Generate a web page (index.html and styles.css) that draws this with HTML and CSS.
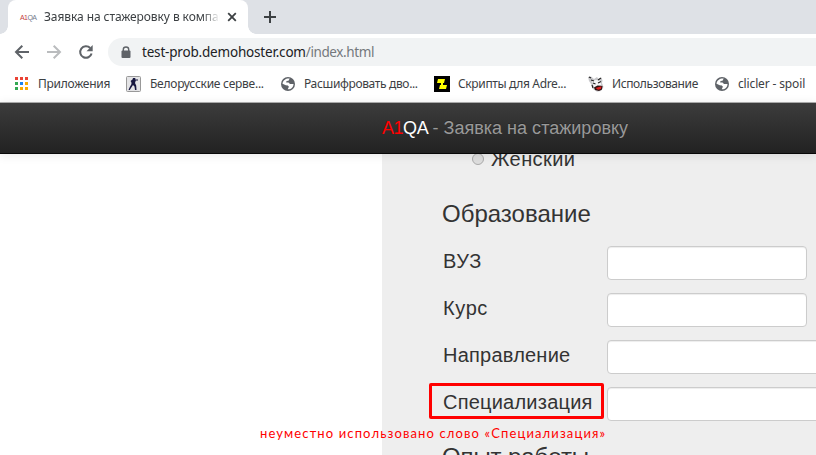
FILE: index.html
```html
<!DOCTYPE html>
<html lang="ru">
<head>
<meta charset="utf-8">
<title>Заявка на стажировку</title>
<link rel="stylesheet" href="styles.css">
</head>
<body>
<div class="window">
  <div class="tabstrip">
    <div class="tab">
      <span class="favicon"><span class="fav-red">A1</span>QA</span>
      <span class="tab-title">Заявка на стажеровку в компании</span>
      <svg class="tab-close" width="10" height="10" viewBox="0 0 10 10"><path d="M1.2 1.2l7.6 7.6M8.8 1.2L1.2 8.8" stroke="#3c4043" stroke-width="1.8"/></svg>
    </div>
    <svg class="new-tab" width="14" height="14" viewBox="0 0 14 14"><path d="M7 1v12M1 7h12" stroke="#3c4043" stroke-width="2"/></svg>
  </div>
  <div class="toolbar">
    <svg class="nav-icon" width="16" height="16" viewBox="0 0 16 16"><path d="M15 8H2.5M8.3 1.7L2 8l6.3 6.3" fill="none" stroke="#5f6368" stroke-width="2"/></svg>
    <svg class="nav-icon" width="16" height="16" viewBox="0 0 16 16"><path d="M1 8h12.5M7.7 1.7L14 8l-6.3 6.3" fill="none" stroke="#babcbe" stroke-width="2"/></svg>
    <svg class="nav-icon" width="16" height="16" viewBox="0 0 16 16"><path d="M13.6 9.5A5.8 5.8 0 1 1 12.2 4" fill="none" stroke="#5f6368" stroke-width="2"/><path d="M14.7 1v6.2H8.5z" fill="#5f6368"/></svg>
    <div class="omnibox">
      <svg class="lock" width="10" height="13" viewBox="0 0 10 13"><path d="M2.3 6V3.4a2.7 2.4 0 0 1 5.4 0V6" fill="none" stroke="#5f6368" stroke-width="1.4"/><rect x="0.5" y="4.5" width="9" height="7.5" rx="1" fill="#5f6368"/></svg>
      <span class="url-host">test-prob.demohoster.com</span><span class="url-path">/index.html</span>
    </div>
  </div>
  <div class="bookmarks">
    <div class="bookmark bm-apps">
      <svg width="16" height="16" viewBox="0 0 16 16"><path d="M1 1h3v3H1zM6 1h3v3H6zM11 1h3v3h-3z" fill="#ea4335"/><path d="M1 6h3v3H1zM1 11h3v3H1z" fill="#34a853"/><path d="M6 6h3v3H6z" fill="#1a84f0"/><path d="M11 6h3v3h-3zM6 11h3v3H6zM11 11h3v3h-3z" fill="#f9ab00"/></svg>
      <span class="bm-text">Приложения</span>
    </div>
    <div class="bookmark bm-games">
      <svg width="16" height="16" viewBox="0 0 16 16"><rect x=".5" y=".5" width="14" height="15" rx="1" fill="#e4e4e6" stroke="#999"/><path d="M7 2h2.300v1.500H12v1H9.800L9 7l1.200 2.500.3 4.500H9l-.5-3.500L7 9l-2 3-1.200 2H2.500l1.300-3L5.500 8 5.300 6 4.500 5l2-1.500z" fill="#171740"/></svg>
      <span class="bm-text">Белорусские серве...</span>
    </div>
    <div class="bookmark bm-decode">
      <svg width="16" height="16" viewBox="0 0 16 16"><circle cx="8" cy="8" r="7" fill="#5f6368"/><path d="M9.7 2.6C6.5 2 3 4 2.5 7.7l3.3 1.6 2.1.2 1 1.3-1.2 2.5C11 13.600 13.600 11 13.500 8H10L8.500 6.500H6.200L6.500 5l2-.3z" fill="#fff"/></svg>
      <span class="bm-text">Расшифровать дво...</span>
    </div>
    <div class="bookmark bm-scripts">
      <svg width="16" height="16" viewBox="0 0 16 16"><path d="M0 0h16v16H0z"/><path d="M4 3h7l-1 4H3zM6 9h7l-1 4H5z" fill="#ff0"/><path d="M7 6.500h2v3H7z" fill="#ff0"/></svg>
      <span class="bm-text">Скрипты для Adre...</span>
    </div>
    <div class="bookmark bm-usage">
      <svg width="16" height="16" viewBox="0 0 16 16"><path d="M0 1l3-.5L6 3l3-2 1.500 2 3-1.500 1 3L14 7l1.500 4-2.500 4-4 .8L5 13 3 8 1 5z" fill="#c9c9cc"/><path d="M4 5l4-1 5 1v4l-7 2z" fill="#f4f4f6"/><path d="M1 1l2 1M3 4l3 1M10 4l3-2M5 7l2.500 1M10 7l3-1.500M4 9l1 3" stroke="#222" stroke-width="1.200"/><path d="M6 11.500l3.500-2 5 .5-.5 3.500-3 1.500-4-1z" fill="#2a1010"/><path d="M7.500 12l6-1.700-.5 2.700-3 .8z" fill="#e02020"/></svg>
      <span class="bm-text">Использование</span>
    </div>
    <div class="bookmark bm-spoil">
      <svg width="16" height="16" viewBox="0 0 16 16"><circle cx="8" cy="8" r="7" fill="#5f6368"/><path d="M9.7 2.6C6.5 2 3 4 2.5 7.7l3.3 1.6 2.1.2 1 1.3-1.2 2.5C11 13.600 13.600 11 13.500 8H10L8.500 6.500H6.200L6.500 5l2-.3z" fill="#fff"/></svg>
      <span class="bm-text">clicler - spoil</span>
    </div>
  </div>
  <header class="navbar"><span class="brand-red">A1</span><span class="brand-white">QA</span><span class="brand-title">- Заявка на стажировку</span></header>
  <main class="page">
    <form class="form">
      <div class="gender"><span class="radio"></span><span class="gender-label">Женский</span></div>
      <h2 class="heading heading-edu">Образование</h2>
      <div class="row"><label class="label l-vuz">ВУЗ</label><span class="field"></span></div>
      <div class="row"><label class="label l-kurs">Курс</label><span class="field"></span></div>
      <div class="row"><label class="label l-dir">Направление</label><span class="field field-wide"></span></div>
      <div class="row"><label class="label l-spec">Специализация</label><span class="field field-wide"></span></div>
      <h2 class="heading heading-work">Опыт работы</h2>
    </form>
    <div class="mark"></div>
    <div class="note">неуместно использовано слово «Специализация»</div>
  </main>
</div>
</body>
</html>
```
FILE: styles.css
```css
* { box-sizing: border-box; }
body { margin: 0; background: #fff; font-family: "Liberation Sans", Arial, sans-serif; }
.window { width: 816px; height: 455px; overflow: hidden; display: flex; flex-direction: column; }
.window svg { display: block; flex: none; }
.tabstrip { flex: none; height: 34px; background: #dee1e6; display: flex; align-items: center; padding-left: 8px; }
.tab { width: 240px; height: 34px; background: #fff; border-radius: 8px 8px 0 0; display: flex; align-items: center; padding-left: 12px; position: relative; }
.tab::before, .tab::after { content: ""; position: absolute; bottom: 0; width: 8px; height: 8px; }
.tab::before { left: -8px; background: radial-gradient(circle at 0 0, #dee1e6 7.5px, #fff 8px); }
.tab::after { right: -8px; background: radial-gradient(circle at 100% 0, #dee1e6 7.5px, #fff 8px); }
.favicon { width: 24px; flex: none; font-size: 7px; color: #747b8c; white-space: nowrap; letter-spacing: -0.6px; }
.fav-red { color: #c43c3c; }
.tab-title { width: 176px; font: 12px/18px "Noto Sans", sans-serif; letter-spacing: -0.08px; color: #3c4043; white-space: nowrap; overflow: hidden; -webkit-mask-image: linear-gradient(90deg, #000 158px, transparent 176px); mask-image: linear-gradient(90deg, #000 158px, transparent 176px); }
.tab-close { margin-left: 7px; }
.new-tab { margin-left: 15px; }
.toolbar { flex: none; height: 36px; display: flex; align-items: center; padding-left: 14px; gap: 16px; }
.omnibox { flex: 1; height: 28px; margin-left: -2px; border-radius: 14px 0 0 14px; background: #f1f3f4; display: flex; align-items: center; padding-left: 13px; font: 13.5px/20px "Noto Sans", sans-serif; white-space: nowrap; }
.lock { margin-right: 11px; }
.url-host { color: #202124; letter-spacing: -0.19px; }
.url-path { color: #74787c; letter-spacing: -0.4px; }
.bookmarks { flex: none; height: 33px; border-bottom: 1px solid #b0b0b0; display: flex; padding: 0 0 5px 14px; }
.bookmark { display: flex; align-items: center; gap: 8px; flex: none; font: 12px/18px "Noto Sans", sans-serif; color: #3c4043; white-space: nowrap; }
.bm-apps { width: 112px; letter-spacing: -0.25px; }
.bm-games { width: 154px; letter-spacing: -0.25px; }
.bm-decode { width: 154px; letter-spacing: -0.35px; }
.bm-scripts { width: 154px; letter-spacing: -0.35px; }
.bm-usage { width: 126px; letter-spacing: -0.38px; }
.bm-spoil { letter-spacing: -0.14px; }
.navbar { flex: none; height: 51px; background: linear-gradient(#3c3c3c, #222); border-bottom: 1px solid #080808; padding-left: 382px; font-size: 18px; line-height: 51px; color: #999; white-space: nowrap; text-shadow: 0 -1px 0 rgba(0,0,0,.25); box-shadow: 0 1px 10px rgba(0,0,0,.1); position: relative; z-index: 1; }
.brand-red { color: red; letter-spacing: -0.5px; text-shadow: none; }
.brand-white { color: #fff; letter-spacing: -0.3px; }
.brand-title { margin-left: 4px; letter-spacing: 0.02px; }
.page { flex: 1; min-height: 0; padding-left: 382px; position: relative; }
.form { height: 301px; background: #eee; padding-left: 60px; color: #333; overflow: hidden; }
.gender { display: flex; align-items: center; height: 24px; margin-top: -7px; padding-left: 30px; font-size: 20px; letter-spacing: 0.4px; }
.radio { width: 12px; height: 12px; border: 1px solid #aaa; border-radius: 50%; background: #ddd; margin-right: 7px; }
.heading { margin: 0; font-size: 24px; font-weight: 400; line-height: 30px; white-space: nowrap; }
.heading-edu { margin-top: 28px; margin-bottom: 17px; }
.row { display: flex; height: 34px; margin-bottom: 13px; }
.label { width: 165px; padding-left: 1px; font-size: 20px; line-height: 30px; letter-spacing: 0.22px; white-space: nowrap; flex: none; }
.l-vuz, .l-kurs { letter-spacing: 0.6px; }
.field { width: 200px; height: 34px; flex: none; background: #fff; border: 1px solid #ccc; border-radius: 4px; box-shadow: inset 0 1px 1px rgba(0,0,0,.075); }
.field-wide { width: 280px; }
.heading-work { margin-top: 21px; letter-spacing: -0.1px; }
.mark { position: absolute; left: 429px; top: 229px; width: 175px; height: 36px; border: 3px solid red; border-radius: 2px; }
.note { position: absolute; left: 260px; top: 269px; font: 13px/20px Lato, sans-serif; letter-spacing: 1.12px; color: red; white-space: nowrap; }
```
